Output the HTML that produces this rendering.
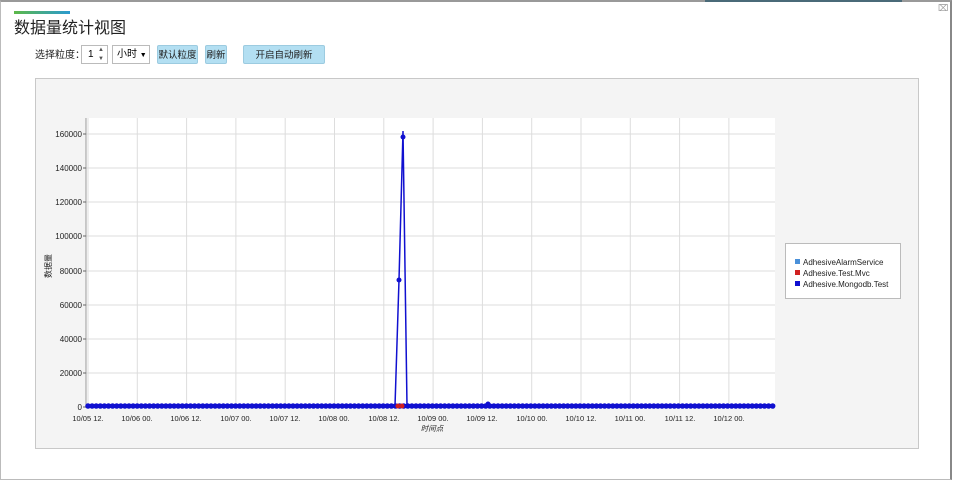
<!DOCTYPE html>
<html><head><meta charset="utf-8"><style>
body{margin:0;width:955px;height:480px;background:#fff;font-family:"Liberation Sans","Noto Sans CJK SC",sans-serif;position:relative;overflow:hidden}
.frame{position:absolute;left:0;top:0;width:949px;height:477px;border:1px solid #bbb;border-top:2px solid #999;border-right:2px solid #888}
.bar{position:absolute;left:14px;top:11px;width:56px;height:3px;background:linear-gradient(90deg,#5cb848,#2a9ad0)}
.title{position:absolute;left:14px;top:14px;font-size:16px;color:#222}
.lbl{position:absolute;left:35px;top:46px;font-size:10px;color:#222}
.box{position:absolute;border:1px solid #bbb;background:#fff;font-size:10px;box-sizing:border-box;text-align:center;line-height:18px}
.btn{position:absolute;top:45px;height:19px;background:#b3dff2;border:1px solid #9ccbe0;border-radius:2px;font-size:9.5px;text-align:center;line-height:19px;box-sizing:border-box;color:#222}
.panel{position:absolute;left:35px;top:78px;width:884px;height:371px;background:#f4f4f4;border:1px solid #c8c8c8;box-sizing:border-box}
</style></head><body>
<div class="frame"></div>
<div style="position:absolute;left:705px;top:0;width:197px;height:2px;background:#4a6a78"></div>
<div style="position:absolute;left:938px;top:3px;font-size:9px;color:#999">⌧</div>
<div class="bar"></div>
<div class="title">数据量统计视图</div>
<div class="lbl">选择粒度：</div>
<div class="box" style="left:81px;top:45px;width:27px;height:19px;text-align:left;padding-left:6px">1<span style="position:absolute;left:16px;top:0;font-size:6px;line-height:9px;color:#555">▲<br>▼</span></div>
<div class="box" style="left:112px;top:45px;width:38px;height:19px;text-align:left;padding-left:4px">小时 <span style="font-size:7px">▼</span></div>
<div class="btn" style="left:157px;width:41px">默认粒度</div>
<div class="btn" style="left:205px;width:22px">刷新</div>
<div class="btn" style="left:243px;width:82px">开启自动刷新</div>
<div class="panel"></div>
<svg style="position:absolute;left:0;top:0" width="955" height="480" font-family="Liberation Sans,Noto Sans CJK SC,sans-serif">
<rect x="86" y="118" width="689" height="290" fill="#fff"/>
<g stroke="#ddd" stroke-width="1">
<line x1="86" y1="134" x2="775" y2="134"/><line x1="86" y1="168" x2="775" y2="168"/><line x1="86" y1="202" x2="775" y2="202"/><line x1="86" y1="236" x2="775" y2="236"/><line x1="86" y1="271" x2="775" y2="271"/><line x1="86" y1="305" x2="775" y2="305"/><line x1="86" y1="339" x2="775" y2="339"/><line x1="86" y1="373" x2="775" y2="373"/>
<line x1="88" y1="118" x2="88" y2="408"/><line x1="137.3" y1="118" x2="137.3" y2="408"/><line x1="186.6" y1="118" x2="186.6" y2="408"/><line x1="235.9" y1="118" x2="235.9" y2="408"/><line x1="285.2" y1="118" x2="285.2" y2="408"/><line x1="334.5" y1="118" x2="334.5" y2="408"/><line x1="383.8" y1="118" x2="383.8" y2="408"/><line x1="433.1" y1="118" x2="433.1" y2="408"/><line x1="482.4" y1="118" x2="482.4" y2="408"/><line x1="531.7" y1="118" x2="531.7" y2="408"/><line x1="581" y1="118" x2="581" y2="408"/><line x1="630.3" y1="118" x2="630.3" y2="408"/><line x1="679.6" y1="118" x2="679.6" y2="408"/><line x1="728.9" y1="118" x2="728.9" y2="408"/>
</g>
<line x1="86" y1="118" x2="86" y2="408" stroke="#999"/>
<g stroke="#666"><line x1="83" y1="134" x2="86" y2="134"/><line x1="83" y1="168" x2="86" y2="168"/><line x1="83" y1="202" x2="86" y2="202"/><line x1="83" y1="236" x2="86" y2="236"/><line x1="83" y1="271" x2="86" y2="271"/><line x1="83" y1="305" x2="86" y2="305"/><line x1="83" y1="339" x2="86" y2="339"/><line x1="83" y1="373" x2="86" y2="373"/><line x1="83" y1="407" x2="86" y2="407"/></g>
<g font-size="8" fill="#222" text-anchor="end">
<text x="82" y="137">160000</text><text x="82" y="171">140000</text><text x="82" y="205">120000</text><text x="82" y="239">100000</text><text x="82" y="274">80000</text><text x="82" y="308">60000</text><text x="82" y="342">40000</text><text x="82" y="376">20000</text><text x="82" y="410">0</text>
</g>
<g font-size="7.5" fill="#222" text-anchor="middle">
<text x="88" y="421">10/05 12.</text><text x="137" y="421">10/06 00.</text><text x="186" y="421">10/06 12.</text><text x="236" y="421">10/07 00.</text><text x="285" y="421">10/07 12.</text><text x="334" y="421">10/08 00.</text><text x="384" y="421">10/08 12.</text><text x="433" y="421">10/09 00.</text><text x="482" y="421">10/09 12.</text><text x="532" y="421">10/10 00.</text><text x="581" y="421">10/10 12.</text><text x="630" y="421">10/11 00.</text><text x="680" y="421">10/11 12.</text><text x="729" y="421">10/12 00.</text>
<text x="432" y="431" font-style="italic" font-size="7.5">时间点</text>
</g>
<text x="51" y="266" font-size="8" fill="#222" text-anchor="middle" transform="rotate(-90 51 266)">数据量</text>
<line x1="88" y1="406" x2="774" y2="406" stroke="#1010d0" stroke-width="1.5"/>
<line x1="88" y1="406" x2="774" y2="406" stroke="#1010d0" stroke-width="5.5" stroke-linecap="round" stroke-dasharray="0 4.1"/>
<polyline points="395,406 399,280 403,131 407,406" fill="none" stroke="#1010d0" stroke-width="1.5"/>
<circle cx="399" cy="280" r="2.5" fill="#1010d0"/><circle cx="403" cy="137" r="2.5" fill="#1010d0"/>
<circle cx="398" cy="406" r="2.5" fill="#d02020"/><circle cx="402" cy="406" r="2.5" fill="#d02020"/>
<circle cx="488" cy="404" r="2.5" fill="#1010d0"/>
<rect x="785.5" y="243.5" width="115" height="55" fill="#fff" stroke="#bbb"/>
<rect x="795" y="259" width="5" height="5" fill="#4a90d9"/><rect x="795" y="270" width="5" height="5" fill="#d02020"/><rect x="795" y="281" width="5" height="5" fill="#1010d0"/>
<g font-size="8" fill="#222"><text x="803" y="265">AdhesiveAlarmService</text><text x="803" y="276">Adhesive.Test.Mvc</text><text x="803" y="287">Adhesive.Mongodb.Test</text></g>
</svg>
</body></html>
